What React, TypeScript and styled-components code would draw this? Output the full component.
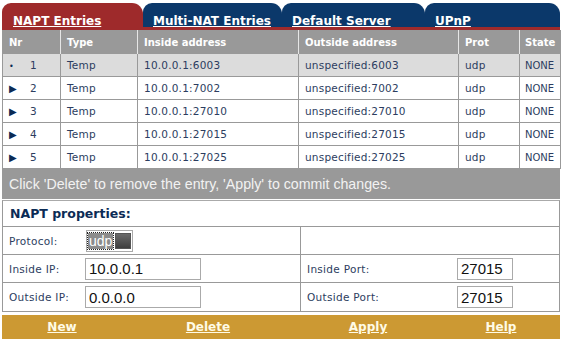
import React from 'react';
import styled, { createGlobalStyle } from 'styled-components';

const GlobalStyle = createGlobalStyle`
    body {
        margin: 0;
        background: #fff;
        font-family: "DejaVu Sans", Verdana, sans-serif;
    }
`

const Page = styled.div`
    width: 558px;
    margin-left: 2px;
    padding-top: 3px;
`

const TabBar = styled.div`
    display: flex;
    height: 24px;
    border-bottom: 3px solid #9e2a2b;
`

const Tab = styled.div<{ active?: boolean; w: number }>`
    width: ${(p) => p.w}px;
    box-sizing: border-box;
    padding: 7px 0 0 ${(p) => (p.active ? 11 : 10)}px;
    background: ${(p) => (p.active ? '#9e2a2b' : '#0b386a')};
    border-radius: 9px 11px 0 0;
    a {
        color: #fff;
        font-weight: bold;
        font-size: 12px;
        text-decoration: underline;
    }
`

const Grid = styled.table`
    width: 100%;
    table-layout: fixed;
    border-collapse: collapse;
    border-left: 1px solid #999;
    border-right: 1px solid #999;
    font-size: 10.5px;
    color: #2c3d60;
`

const Head = styled.th`
    height: 24px;
    background: #999;
    color: #fff;
    font-weight: bold;
    font-size: 10px;
    text-align: left;
    padding: 0 0 0 6px;
    white-space: nowrap;
    overflow: hidden;
    border-left: 1px solid #e6e6e6;
    &:first-child {
        border-left: none;
    }
    &:last-child {
        padding-left: 5px;
    }
`

const Row = styled.tr<{ selected?: boolean }>`
    background: ${(p) => (p.selected ? '#dcdcdc' : '#fff')};
    td {
        height: 22px;
        padding: 0 0 0 6px;
        border: 1px solid #999;
        border-top: none;
        letter-spacing: 0.2px;
        white-space: nowrap;
        overflow: hidden;
    }
    td:last-child {
        padding-left: 5px;
        letter-spacing: 0;
        font-size: 10px;
    }
`

const Marker = styled.span<{ dot?: boolean }>`
    display: inline-block;
    width: 21px;
    font-size: ${(p) => (p.dot ? 8 : 10)}px;
    color: #0b2b55;
    vertical-align: ${(p) => (p.dot ? 'middle' : '0')};
`

const Message = styled.div`
    height: 30px;
    background: #999;
    color: #f2f2f2;
    font-family: "Liberation Sans", Arial, sans-serif;
    font-size: 14.2px;
    display: flex;
    align-items: center;
    padding-left: 7px;
    border-bottom: 1px solid #fff;
`

const Props = styled.div`
    border: 1px solid #999;
    border-top-color: #aaa;
`

const PropsTitle = styled.div`
    height: 25px;
    display: flex;
    align-items: center;
    padding-left: 7px;
    font-size: 12.5px;
    font-weight: bold;
    color: #0b2b55;
    border-bottom: 1px solid #999;
`

const PropsRow = styled.div<{ last?: boolean }>`
    display: grid;
    grid-template-columns: 297px 1fr;
    height: ${(p) => (p.last ? 28 : 27)}px;
    border-bottom: ${(p) => (p.last ? 'none' : '1px solid #999')};
`

const Cell = styled.div<{ divider?: boolean }>`
    display: flex;
    align-items: center;
    padding-left: 6px;
    border-left: ${(p) => (p.divider ? '1px solid #999' : 'none')};
`

const Label = styled.span<{ w: number }>`
    width: ${(p) => p.w}px;
    font-size: 10.5px;
    color: #2c3d60;
    letter-spacing: 0.3px;
`

const Field = styled.input<{ w: number }>`
    width: ${(p) => p.w}px;
    height: 22px;
    box-sizing: border-box;
    border: 1px solid #aaa;
    padding: 0 3px;
    font-family: "Liberation Sans", Arial, sans-serif;
    font-size: 15px;
    color: #111;
    outline: none;
`

const Select = styled.div`
    display: flex;
    align-items: center;
    height: 20px;
    border: 1px solid #aaa;
    padding: 0 1px;
    gap: 2px;
`

const SelectValue = styled.span`
    background: #8c8c8c;
    color: #fff;
    font-family: "Liberation Sans", Arial, sans-serif;
    font-size: 14px;
    line-height: 16px;
    padding: 0 1px;
    outline: 1px dotted #222;
`

const SelectButton = styled.span`
    width: 16px;
    height: 16px;
    background: linear-gradient(#6a6a6a, #3e3e3e);
    border: 1px solid #555;
    box-sizing: border-box;
`

const Footer = styled.div`
    margin-top: 3px;
    height: 24px;
    background: #cc9933;
    display: grid;
    grid-template-columns: 120px 172px 148px 1fr;
    align-items: center;
    justify-items: center;
    a {
        color: #fffbe6;
        font-weight: bold;
        font-size: 12px;
        text-decoration: underline;
    }
`

const columns = [
    { title: 'Nr', w: 58 },
    { title: 'Type', w: 77 },
    { title: 'Inside address', w: 161 },
    { title: 'Outside address', w: 160 },
    { title: 'Prot', w: 61 },
    { title: 'State', w: 41 },
];

const entries = [
    { nr: 1, port: 6003 },
    { nr: 2, port: 7002 },
    { nr: 3, port: 27010 },
    { nr: 4, port: 27015 },
    { nr: 5, port: 27025 },
];

function App() {
    return (
        <>
            <GlobalStyle />
            <Page>
                <TabBar>
                    <Tab active w={141}><a>NAPT Entries</a></Tab>
                    <Tab w={139}><a>Multi-NAT Entries</a></Tab>
                    <Tab w={143}><a>Default Server</a></Tab>
                    <Tab w={135}><a>UPnP</a></Tab>
                </TabBar>
                <Grid>
                    <colgroup>
                        {columns.map((c) => (
                            <col key={c.title} style={{ width: c.w }} />
                        ))}
                    </colgroup>
                    <thead>
                        <tr>
                            {columns.map((c) => (
                                <Head key={c.title}>{c.title}</Head>
                            ))}
                        </tr>
                    </thead>
                    <tbody>
                        {entries.map((e) => (
                            <Row key={e.nr} selected={e.nr === 1}>
                                <td>
                                    <Marker dot={e.nr === 1}>{e.nr === 1 ? '•' : '▶'}</Marker>
                                    {e.nr}
                                </td>
                                <td>Temp</td>
                                <td>10.0.0.1:{e.port}</td>
                                <td>unspecified:{e.port}</td>
                                <td>udp</td>
                                <td>NONE</td>
                            </Row>
                        ))}
                    </tbody>
                </Grid>
                <Message>Click 'Delete' to remove the entry, 'Apply' to commit changes.</Message>
                <Props>
                    <PropsTitle>NAPT properties:</PropsTitle>
                    <PropsRow>
                        <Cell>
                            <Label w={77}>Protocol:</Label>
                            <Select>
                                <SelectValue>udp</SelectValue>
                                <SelectButton />
                            </Select>
                        </Cell>
                        <Cell divider />
                    </PropsRow>
                    <PropsRow>
                        <Cell>
                            <Label w={76}>Inside IP:</Label>
                            <Field w={116} defaultValue="10.0.0.1" />
                        </Cell>
                        <Cell divider>
                            <Label w={150}>Inside Port:</Label>
                            <Field w={56} defaultValue="27015" />
                        </Cell>
                    </PropsRow>
                    <PropsRow last>
                        <Cell>
                            <Label w={76}>Outside IP:</Label>
                            <Field w={116} defaultValue="0.0.0.0" />
                        </Cell>
                        <Cell divider>
                            <Label w={150}>Outside Port:</Label>
                            <Field w={56} defaultValue="27015" />
                        </Cell>
                    </PropsRow>
                </Props>
                <Footer>
                    <a>New</a>
                    <a>Delete</a>
                    <a>Apply</a>
                    <a>Help</a>
                </Footer>
            </Page>
        </>
    );
}

export default App;
